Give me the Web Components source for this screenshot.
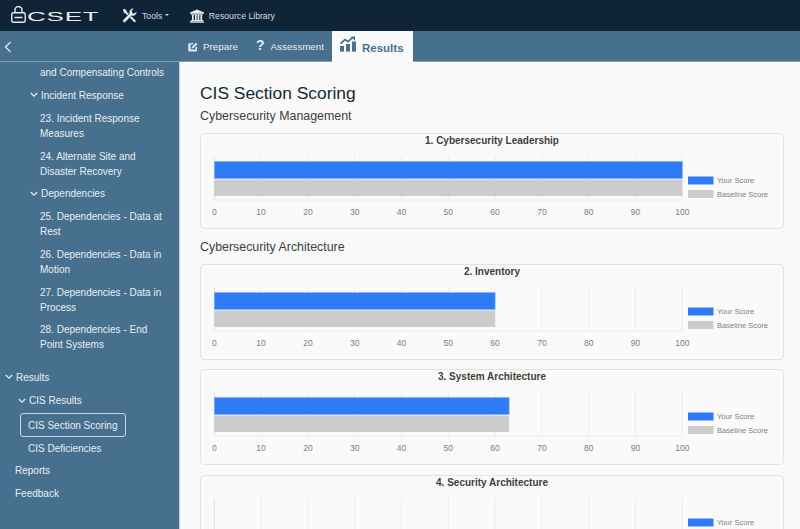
<!DOCTYPE html>
<html lang="en">
<head>
<meta charset="utf-8">
<title>CIS Section Scoring</title>
<style>
html,body{margin:0;padding:0;height:100%;overflow:hidden;background:#fafafa}
body{font-family:"Liberation Sans",Arial,sans-serif}
</style>
</head>
<body>
<cset-app>
  <cset-topbar slot="top"></cset-topbar>
  <cset-tabs slot="tabs"></cset-tabs>
  <cset-sidebar slot="side">
    <nav-row indent="40">and Compensating Controls</nav-row>
    <nav-row indent="41" chevron="30" gap="7.5">Incident Response</nav-row>
    <nav-row indent="40" gap="8.5">23. Incident Response Measures</nav-row>
    <nav-row indent="40" gap="8">24. Alternate Site and Disaster Recovery</nav-row>
    <nav-row indent="41" chevron="30" gap="7">Dependencies</nav-row>
    <nav-row indent="40" gap="8">25. Dependencies - Data at Rest</nav-row>
    <nav-row indent="40" gap="8">26. Dependencies - Data in Motion</nav-row>
    <nav-row indent="40" gap="8">27. Dependencies - Data in Process</nav-row>
    <nav-row indent="40" gap="6.5">28. Dependencies - End Point Systems</nav-row>
    <nav-row indent="16" chevron="5" gap="18">Results</nav-row>
    <nav-row indent="29" chevron="18" gap="8.5">CIS Results</nav-row>
    <nav-row indent="28" gap="5" current>CIS Section Scoring</nav-row>
    <nav-row indent="28" gap="3.5">CIS Deficiencies</nav-row>
    <nav-row indent="15" gap="7.5">Reports</nav-row>
    <nav-row indent="15" gap="7.5">Feedback</nav-row>
  </cset-sidebar>
  <main-pane slot="main">
    <h1 slot="title">CIS Section Scoring</h1>
    <section-head>Cybersecurity Management</section-head>
    <score-card heading="1. Cybersecurity Leadership" value="100"></score-card>
    <section-head>Cybersecurity Architecture</section-head>
    <score-card heading="2. Inventory" value="60"></score-card>
    <score-card heading="3. System Architecture" value="63"></score-card>
    <score-card heading="4. Security Architecture" value="0" cut></score-card>
  </main-pane>
</cset-app>
<script>
function define(name, html){
  customElements.define(name, class extends HTMLElement{
    constructor(){super();this.attachShadow({mode:'open'}).innerHTML=typeof html==='function'?'':html;}
    connectedCallback(){ if(typeof html==='function') this.shadowRoot.innerHTML=html(this);}
  });
}

define('cset-app',`<style>
:host{display:grid;width:800px;height:529px;grid-template-columns:180px 1fr;grid-template-rows:31px 31px 1fr;overflow:hidden;background:#fafafa}
.a{grid-column:1/3}.b{display:block;min-height:0;overflow:hidden}
</style>
<div class="a"><slot name="top"></slot></div>
<div class="a"><slot name="tabs"></slot></div>
<div class="b"><slot name="side"></slot></div>
<div class="b"><slot name="main"></slot></div>`);

define('cset-topbar',`<style>
:host{display:flex;align-items:center;height:31px;background:#0f2537;color:#d4dbe0;font:8.7px/12px "Liberation Sans",Arial,sans-serif;box-sizing:border-box}
.logo{display:flex;align-items:center;margin-left:11px;width:89px;height:20px;margin-top:-4px}
.word{display:inline-block;margin-left:1px;margin-top:6px;font:400 17px/17px "Liberation Sans",Arial,sans-serif;color:#e8ecef;letter-spacing:.5px;transform:scale(1.53,.74);transform-origin:0 50%;white-space:nowrap}
.item{display:flex;align-items:center}
.tools{margin-left:22px}.lib{margin-left:20.5px}
.tools svg{margin-right:5px}.lib svg{margin-right:5px}
.caret{width:0;height:0;border:2.6px solid transparent;border-top-color:#d4dbe0;border-bottom:0;margin-left:3px;margin-top:-2px}
svg{display:block}
</style>
<div class="logo">
  <svg width="15" height="17" viewBox="0 0 15 17" fill="none" stroke="#e8ecef" style="margin-top:2px"><path d="M4 6.5V4a3.5 3.5 0 0 1 7 0v2.5" stroke-width="1.4"/><rect x=".8" y="6.7" width="13.4" height="9.6" rx="1.6" stroke-width="1.4"/><path d="M3.5 11.5h8" stroke-width="1.4"/></svg>
  <span class="word">CSET</span>
</div>
<div class="item tools">
  <svg width="15" height="15" viewBox="0 0 15 15"><path d="M1 1.8 2.2 .8 4.6 2.4 4.9 4 13.6 12.6a1.1 1.1 0 0 1-1.5 1.5L3.5 5.3 2 5z" fill="#e8ecef"/><path d="M14.6 3.2 12.4 5.3 10.3 4.9 9.9 2.7 12 .5A3.9 3.9 0 0 0 7.4 5.6L1 12a1.6 1.6 0 0 0 2.2 2.2L9.6 7.8a3.9 3.9 0 0 0 5-4.6z" fill="#e8ecef" stroke="#0f2537" stroke-width=".5"/></svg>
  <span>Tools</span><span class="caret"></span>
</div>
<div class="item lib">
  <svg width="14" height="14" viewBox="0 0 14 14" fill="#e8ecef"><path d="M7 .5 14 3.6V4.8H0V3.6z"/><rect x="1" y="5.3" width="12" height=".8"/><rect x="2" y="6" width="1.7" height="5"/><rect x="5" y="6" width="1.7" height="5"/><rect x="7.6" y="6" width="1.7" height="5"/><rect x="10.4" y="6" width="1.7" height="5"/><rect x="1" y="11" width="12" height="1"/><rect x="0" y="12.3" width="14" height="1.4"/></svg>
  <span>Resource Library</span>
</div>`);

define('cset-tabs',`<style>
:host{display:flex;align-items:stretch;height:31px;background:#47708f;color:#e6ecf0;font:9.8px/14px "Liberation Sans",Arial,sans-serif;box-shadow:inset 0 -1px 0 #7f9db3}
.back{width:188px;display:flex;align-items:center;padding-left:4px;box-sizing:border-box}
.tab{display:flex;align-items:center;padding-top:1px;box-sizing:border-box}
.prep{width:68px;gap:5px}
.asse{width:76px;gap:6px}
.q{font:700 14px/14px "Liberation Sans",Arial,sans-serif;margin-top:-4px}
.res{width:80.5px;background:#fafafa;color:#47708f;font:700 11.5px/14px "Liberation Sans",Arial,sans-serif;gap:6px;padding:3px 0 0 8px}
.res svg{margin-top:-8px}
svg{display:block}
</style>
<div class="back"><svg width="8" height="12" viewBox="0 0 8 12" fill="none" stroke="#e6ecf0" stroke-width="1.2"><path d="M6.5 1 1.5 6l5 5"/></svg></div>
<div class="tab prep"><svg width="10" height="10" viewBox="0 0 10 10"><path d="M1.2 1.2H6L4.6 2.6H2.5v5h5V5.6L9 4.2v4.4a.9.9 0 0 1-.9.9H1.2a.9.9 0 0 1-.9-.9V2.1a.9.9 0 0 1 .9-.9z" fill="#e6ecf0"/><path d="M3.5 6.6 3.9 4.9 8 .8 9.4 2.2 5.2 6.2z" fill="#e6ecf0"/></svg><span>Prepare</span></div>
<div class="tab asse"><span class="q">?</span><span>Assessment</span></div>
<div class="tab res"><svg width="16" height="16" viewBox="0 0 16 16" fill="#47708f"><rect x="0" y="10" width="4" height="5.6"/><rect x="6" y="8" width="4" height="7.6"/><rect x="12" y="5.5" width="4" height="10.1"/><path d="M.5 7.5 5 3.6 8 5.6 12.4 1.6" fill="none" stroke="#47708f" stroke-width="1.7"/><path d="M10.6 .4H15V4.7z"/></svg><span>Results</span></div>`);

define('cset-sidebar',`<style>
:host{display:block;height:100%;background:#47708f;color:#e9eef2;font:10px/15px "Liberation Sans",Arial,sans-serif;box-shadow:inset -1px 0 0 #c6d2db;padding-top:3px;box-sizing:border-box;overflow:hidden}
</style><slot></slot>`);

define('nav-row', el=>{
  const indent=+el.getAttribute('indent')||0, gap=+el.getAttribute('gap')||0, chev=el.getAttribute('chevron');
  const cur=el.hasAttribute('current');
  const chevron=chev!==null?`<svg class="ch" style="left:${chev}px" width="8" height="6" viewBox="0 0 8 6" fill="none" stroke="#e9eef2" stroke-width="1.2"><path d="M.8 1 4 4.2 7.2 1"/></svg>`:'';
  return `<style>
  :host{display:block;position:relative;margin-top:${gap}px;padding-left:${indent}px;padding-right:14px}
  .ch{position:absolute;top:4.5px;display:block}
  .t{display:block}
  ${cur?`.t{display:inline-block;margin-left:-8px;padding:3.5px 7px;border:1px solid #c4d6e6;border-radius:3px;white-space:nowrap}`:''}
  </style>${chevron}<span class="t"><slot></slot></span>`;
});

define('main-pane',`<style>
:host{display:block;height:100%;padding:19px 16px 0 20px;box-sizing:border-box;background:#fafafa;overflow:hidden}
::slotted(h1){margin:0 0 2px;font:400 17.4px/24px "Liberation Sans",Arial,sans-serif;color:#14293a}
</style><slot name="title"></slot><slot></slot>`);

define('section-head',`<style>
:host{display:block;font:400 12.4px/17px "Liberation Sans",Arial,sans-serif;color:#3c4043;padding-top:1px;margin:0 0 7.5px}
</style><slot></slot>`);

define('score-card', el=>{
  const h=el.getAttribute('heading')||'', v=+el.getAttribute('value')||0, cut=el.hasAttribute('cut');
  const x0=13.3, step=46.8;
  let grid='',ticks='';
  for(let i=0;i<=10;i++){
    const x=x0+i*step;
    grid+=`<line x1="${x}" x2="${x}" y1="22" y2="66" stroke="${i==0?'#e2e2e2':'#ececec'}"/>`;
    if(!cut) ticks+=`<text x="${x}" y="81" text-anchor="middle" font-size="8.5" fill="#7d7d7d">${i*10}</text>`;
  }
  const w=v*4.68;
  const bars=v?`<rect x="${x0}" y="27.5" width="${w}" height="17" fill="#2f7bf6" stroke="#7fb0fa" stroke-width=".6"/><rect x="${x0}" y="45.5" width="${w}" height="16.5" fill="#cccccc"/>`:'';
  const second=cut?'':`<rect x="487" y="56" width="25.5" height="8" fill="#cccccc"/><text x="516" y="62.7" font-size="7.6" fill="#7d7d7d">Baseline Score</text>`;
  return `<style>
  :host{display:block;height:96px;margin-bottom:9.5px;box-sizing:border-box;border:1px solid #e3e3e3;border-radius:4px;background:#fafafa}
  svg{display:block;font-family:"Liberation Sans",Arial,sans-serif}
  </style>
  <svg width="582" height="94" viewBox="0 0 582 94">
    <text x="291" y="10" text-anchor="middle" font-size="10" font-weight="700" fill="#3e3e3e">${h}</text>
    ${grid}<line x1="${x0}" x2="${x0+468}" y1="66" y2="66" stroke="#ececec"/>
    ${bars}${ticks}
    <rect x="487" y="42.5" width="25.5" height="8" fill="#2f7bf6"/>
    <text x="516" y="49.2" font-size="7.6" fill="#7d7d7d">Your Score</text>
    ${second}
  </svg>`;
});
</script>
</body>
</html>
